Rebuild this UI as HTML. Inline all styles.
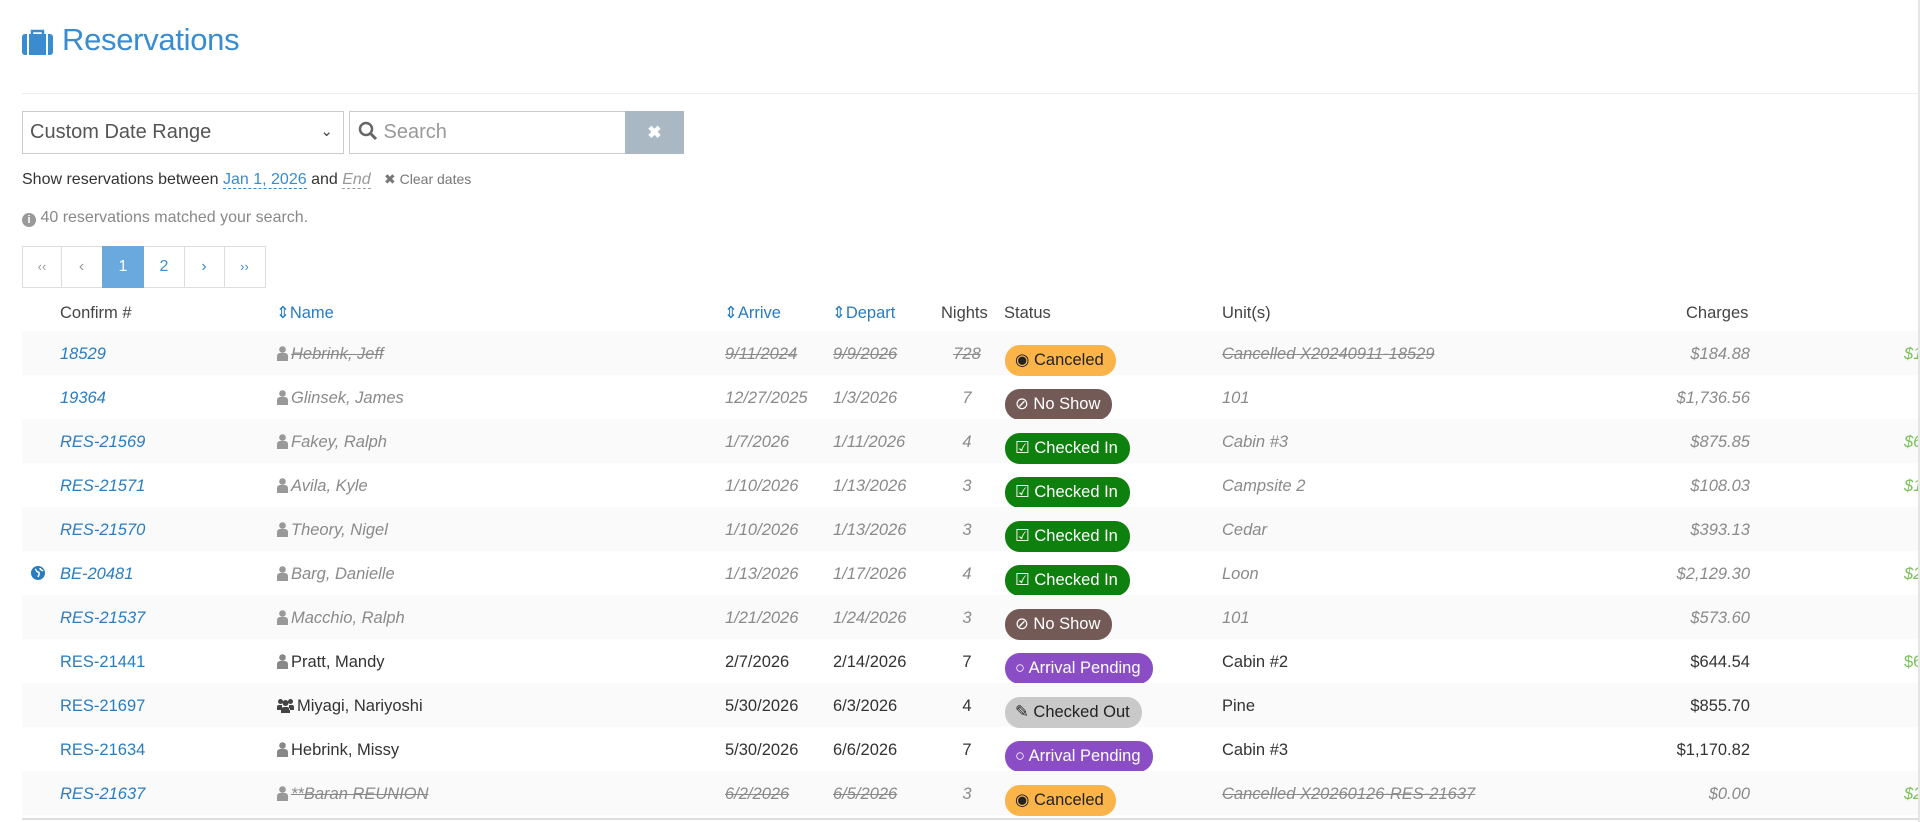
<!DOCTYPE html>
<html><head><meta charset="utf-8"><style>
*{margin:0;padding:0;box-sizing:border-box}
body{width:1920px;height:822px;overflow:hidden;background:#fff;font-family:"Liberation Sans",sans-serif;color:#333;position:relative}
.a{position:absolute;white-space:nowrap}
h1{position:absolute;left:62px;top:22px;font-size:31px;font-weight:normal;color:#3a8cd0;letter-spacing:-0.3px}
.hr{position:absolute;left:22px;right:0;top:93px;height:1px;background:#eee}
.sel{position:absolute;left:22px;top:111px;width:322px;height:43px;border:1px solid #ccc;font-size:20px;color:#555;padding:9px 7px}
.srch{position:absolute;left:349px;top:111px;width:277px;height:43px;border:1px solid #ccc;font-size:20px;color:#999;padding:9px 8px}
.xbtn{position:absolute;left:625px;top:111px;width:59px;height:43px;background:#aab8c4;color:#fff;font-size:17px;font-weight:bold;text-align:center;line-height:43px}
.pg{position:absolute;top:246px;height:42px;border:1px solid #ddd;text-align:center;line-height:40px;font-size:16px;color:#3a8cd0}
.th{position:absolute;top:302px;font-size:16.5px;color:#444;line-height:22px}
.th.s{color:#2a7cc0}
.r{position:absolute;left:22px;width:1898px;height:44px;font-size:16.5px;line-height:44px}
.r.g{background:#fafafa}
.r>span{position:absolute;top:1px}
.c1{left:38px;color:#2a7cc0}
.c2{left:255px}
.c3{left:703px}
.c4{left:811px}
.c5{left:920px;width:50px;text-align:center}
.c7{left:1200px}
.c8{right:170px}
.c9{left:1882px;color:#7cc05c}
.p{font-style:italic;color:#8a8a8a}
.p .c1{color:#2a7cc0}
.k{text-decoration:line-through}
.pi{display:inline-block;vertical-align:-2px;margin-right:3px}
.r>.b{position:absolute;left:983px;top:14px;height:31px;border-radius:15px;padding:0 12px 0 10px;font-size:16.5px;line-height:31px;color:#fff;font-style:normal;text-decoration:none}
.can{background:#fbb44a;color:#222!important}
.ns{background:#735a56}
.ci{background:#0e800e}
.ap{background:#8a4dc6}
.co{background:#c9c9c9;color:#222!important}
.r>.dot{left:9px;top:15px}
</style></head><body>
<svg class="a" style="left:22px;top:29px" width="31" height="26" viewBox="0 0 31 26"><rect x="0" y="5" width="31" height="21" rx="3" fill="#3a8cd0"/><path d="M10 5V2h11v3" stroke="#3a8cd0" stroke-width="2.5" fill="none"/><rect x="5" y="5" width="2" height="21" fill="#fff"/><rect x="24" y="5" width="2" height="21" fill="#fff"/></svg>
<h1>Reservations</h1>
<div class="hr"></div>
<div class="sel">Custom Date Range<span class="a" style="right:10px;top:10px;font-size:15px;color:#444">&#8964;</span></div>
<div class="srch"><svg style="vertical-align:-3px" width="20" height="20" viewBox="0 0 20 20"><circle cx="8" cy="8" r="6" stroke="#666" stroke-width="2.5" fill="none"/><path d="M12.5 12.5L18 18" stroke="#666" stroke-width="3"/></svg> Search</div>
<div class="xbtn">&#10006;</div>
<div class="a" style="left:22px;top:171px;font-size:16px;color:#333">Show reservations between <span style="color:#3a8cd0;border-bottom:1px dashed #3a8cd0">Jan 1, 2026</span> and <span style="color:#999;font-style:italic;border-bottom:1px dashed #999">End</span> &nbsp;&nbsp;<span style="font-size:14px;color:#777">&#10006; Clear dates</span></div>
<div class="a" style="left:22px;top:209px;font-size:16px;color:#888"><span style="display:inline-block;width:14px;height:14px;border-radius:50%;background:#999;color:#fff;font-size:11px;text-align:center;line-height:14px;font-weight:bold;vertical-align:-1px">i</span> 40 reservations matched your search.</div>
<div class="pg" style="left:22px;width:40px;color:#999;font-size:13px">&lsaquo;&lsaquo;</div>
<div class="pg" style="left:61px;width:42px;color:#999;border-left:none">&lsaquo;</div>
<div class="pg" style="left:102px;width:42px;background:#6aa9de;color:#fff;border-color:#6aa9de">1</div>
<div class="pg" style="left:144px;width:41px;border-left:none">2</div>
<div class="pg" style="left:184px;width:41px;border-left:none">&rsaquo;</div>
<div class="pg" style="left:224px;width:42px;border-left:none;font-size:13px">&rsaquo;&rsaquo;</div>
<div class="th" style="left:60px">Confirm #</div>
<div class="th s" style="left:276px">&#8661;&#xFE0E;Name</div>
<div class="th s" style="left:724px">&#8661;&#xFE0E;Arrive</div>
<div class="th s" style="left:832px">&#8661;&#xFE0E;Depart</div>
<div class="th" style="left:941px">Nights</div>
<div class="th" style="left:1004px">Status</div>
<div class="th" style="left:1222px">Unit(s)</div>
<div class="th" style="left:1686px">Charges</div>
<div class="a" style="left:22px;right:0;top:332px;height:2px;background:#ddd"></div>

<div class="r g p" style="top:331px"><span class="c1">18529</span><span class="c2 k"><svg class="pi" width="11" height="15" viewBox="0 0 11 15"><circle cx="5.5" cy="3.5" r="3.3" fill="#999"/><path d="M0 15V10a3 3 0 0 1 3-3h5a3 3 0 0 1 3 3v5z" fill="#999"/></svg>Hebrink, Jeff</span><span class="c3 k">9/11/2024</span><span class="c4 k">9/9/2026</span><span class="c5 k">728</span><span class="b can">&#9673; Canceled</span><span class="c7 k">Cancelled X20240911-18529</span><span class="c8">$184.88</span><span class="c9">$1</span></div>
<div class="r p" style="top:375px"><span class="c1">19364</span><span class="c2"><svg class="pi" width="11" height="15" viewBox="0 0 11 15"><circle cx="5.5" cy="3.5" r="3.3" fill="#999"/><path d="M0 15V10a3 3 0 0 1 3-3h5a3 3 0 0 1 3 3v5z" fill="#999"/></svg>Glinsek, James</span><span class="c3">12/27/2025</span><span class="c4">1/3/2026</span><span class="c5">7</span><span class="b ns">&#8856; No Show</span><span class="c7">101</span><span class="c8">$1,736.56</span></div>
<div class="r g p" style="top:419px"><span class="c1">RES-21569</span><span class="c2"><svg class="pi" width="11" height="15" viewBox="0 0 11 15"><circle cx="5.5" cy="3.5" r="3.3" fill="#999"/><path d="M0 15V10a3 3 0 0 1 3-3h5a3 3 0 0 1 3 3v5z" fill="#999"/></svg>Fakey, Ralph</span><span class="c3">1/7/2026</span><span class="c4">1/11/2026</span><span class="c5">4</span><span class="b ci">&#9745; Checked In</span><span class="c7">Cabin #3</span><span class="c8">$875.85</span><span class="c9">$6</span></div>
<div class="r p" style="top:463px"><span class="c1">RES-21571</span><span class="c2"><svg class="pi" width="11" height="15" viewBox="0 0 11 15"><circle cx="5.5" cy="3.5" r="3.3" fill="#999"/><path d="M0 15V10a3 3 0 0 1 3-3h5a3 3 0 0 1 3 3v5z" fill="#999"/></svg>Avila, Kyle</span><span class="c3">1/10/2026</span><span class="c4">1/13/2026</span><span class="c5">3</span><span class="b ci">&#9745; Checked In</span><span class="c7">Campsite 2</span><span class="c8">$108.03</span><span class="c9">$1</span></div>
<div class="r g p" style="top:507px"><span class="c1">RES-21570</span><span class="c2"><svg class="pi" width="11" height="15" viewBox="0 0 11 15"><circle cx="5.5" cy="3.5" r="3.3" fill="#999"/><path d="M0 15V10a3 3 0 0 1 3-3h5a3 3 0 0 1 3 3v5z" fill="#999"/></svg>Theory, Nigel</span><span class="c3">1/10/2026</span><span class="c4">1/13/2026</span><span class="c5">3</span><span class="b ci">&#9745; Checked In</span><span class="c7">Cedar</span><span class="c8">$393.13</span></div>
<div class="r p" style="top:551px"><svg class="a dot" width="14" height="14" viewBox="0 0 14 14"><circle cx="7" cy="7" r="7" fill="#2a7cc0"/><path d="M4 3c2 1 1 3 3 3s1 3 0 5M9 2c0 2 2 2 3 3" stroke="#fff" stroke-width="1.5" fill="none"/></svg><span class="c1">BE-20481</span><span class="c2"><svg class="pi" width="11" height="15" viewBox="0 0 11 15"><circle cx="5.5" cy="3.5" r="3.3" fill="#999"/><path d="M0 15V10a3 3 0 0 1 3-3h5a3 3 0 0 1 3 3v5z" fill="#999"/></svg>Barg, Danielle</span><span class="c3">1/13/2026</span><span class="c4">1/17/2026</span><span class="c5">4</span><span class="b ci">&#9745; Checked In</span><span class="c7">Loon</span><span class="c8">$2,129.30</span><span class="c9">$2,1</span></div>
<div class="r g p" style="top:595px"><span class="c1">RES-21537</span><span class="c2"><svg class="pi" width="11" height="15" viewBox="0 0 11 15"><circle cx="5.5" cy="3.5" r="3.3" fill="#999"/><path d="M0 15V10a3 3 0 0 1 3-3h5a3 3 0 0 1 3 3v5z" fill="#999"/></svg>Macchio, Ralph</span><span class="c3">1/21/2026</span><span class="c4">1/24/2026</span><span class="c5">3</span><span class="b ns">&#8856; No Show</span><span class="c7">101</span><span class="c8">$573.60</span></div>
<div class="r" style="top:639px"><span class="c1">RES-21441</span><span class="c2"><svg class="pi" width="11" height="15" viewBox="0 0 11 15"><circle cx="5.5" cy="3.5" r="3.3" fill="#888"/><path d="M0 15V10a3 3 0 0 1 3-3h5a3 3 0 0 1 3 3v5z" fill="#888"/></svg>Pratt, Mandy</span><span class="c3">2/7/2026</span><span class="c4">2/14/2026</span><span class="c5">7</span><span class="b ap">&#9675; Arrival Pending</span><span class="c7">Cabin #2</span><span class="c8">$644.54</span><span class="c9">$6</span></div>
<div class="r g" style="top:683px"><span class="c1">RES-21697</span><span class="c2"><svg class="pi" width="17" height="15" viewBox="0 0 17 15"><circle cx="3.5" cy="3.5" r="2.5" fill="#444"/><circle cx="13.5" cy="3.5" r="2.5" fill="#444"/><circle cx="8.5" cy="5" r="3" fill="#444"/><path d="M0 12V9a2 2 0 0 1 2-2h3v5zM17 12V9a2 2 0 0 0-2-2h-3v5zM4 15v-3a3 3 0 0 1 3-3h3a3 3 0 0 1 3 3v3z" fill="#444"/></svg>Miyagi, Nariyoshi</span><span class="c3">5/30/2026</span><span class="c4">6/3/2026</span><span class="c5">4</span><span class="b co">&#9998; Checked Out</span><span class="c7">Pine</span><span class="c8">$855.70</span></div>
<div class="r" style="top:727px"><span class="c1">RES-21634</span><span class="c2"><svg class="pi" width="11" height="15" viewBox="0 0 11 15"><circle cx="5.5" cy="3.5" r="3.3" fill="#888"/><path d="M0 15V10a3 3 0 0 1 3-3h5a3 3 0 0 1 3 3v5z" fill="#888"/></svg>Hebrink, Missy</span><span class="c3">5/30/2026</span><span class="c4">6/6/2026</span><span class="c5">7</span><span class="b ap">&#9675; Arrival Pending</span><span class="c7">Cabin #3</span><span class="c8">$1,170.82</span></div>
<div class="r g p" style="top:771px"><span class="c1">RES-21637</span><span class="c2 k"><svg class="pi" width="11" height="15" viewBox="0 0 11 15"><circle cx="5.5" cy="3.5" r="3.3" fill="#999"/><path d="M0 15V10a3 3 0 0 1 3-3h5a3 3 0 0 1 3 3v5z" fill="#999"/></svg>**Baran REUNION</span><span class="c3 k">6/2/2026</span><span class="c4 k">6/5/2026</span><span class="c5">3</span><span class="b can">&#9673; Canceled</span><span class="c7 k">Cancelled X20260126-RES-21637</span><span class="c8">$0.00</span><span class="c9">$2,2</span></div>
<div class="a" style="left:22px;right:0;top:818px;height:2px;background:#ddd"></div>
<div class="a" style="left:1918px;top:0;width:2px;height:822px;background:#e5e5e5"></div>
</body></html>
